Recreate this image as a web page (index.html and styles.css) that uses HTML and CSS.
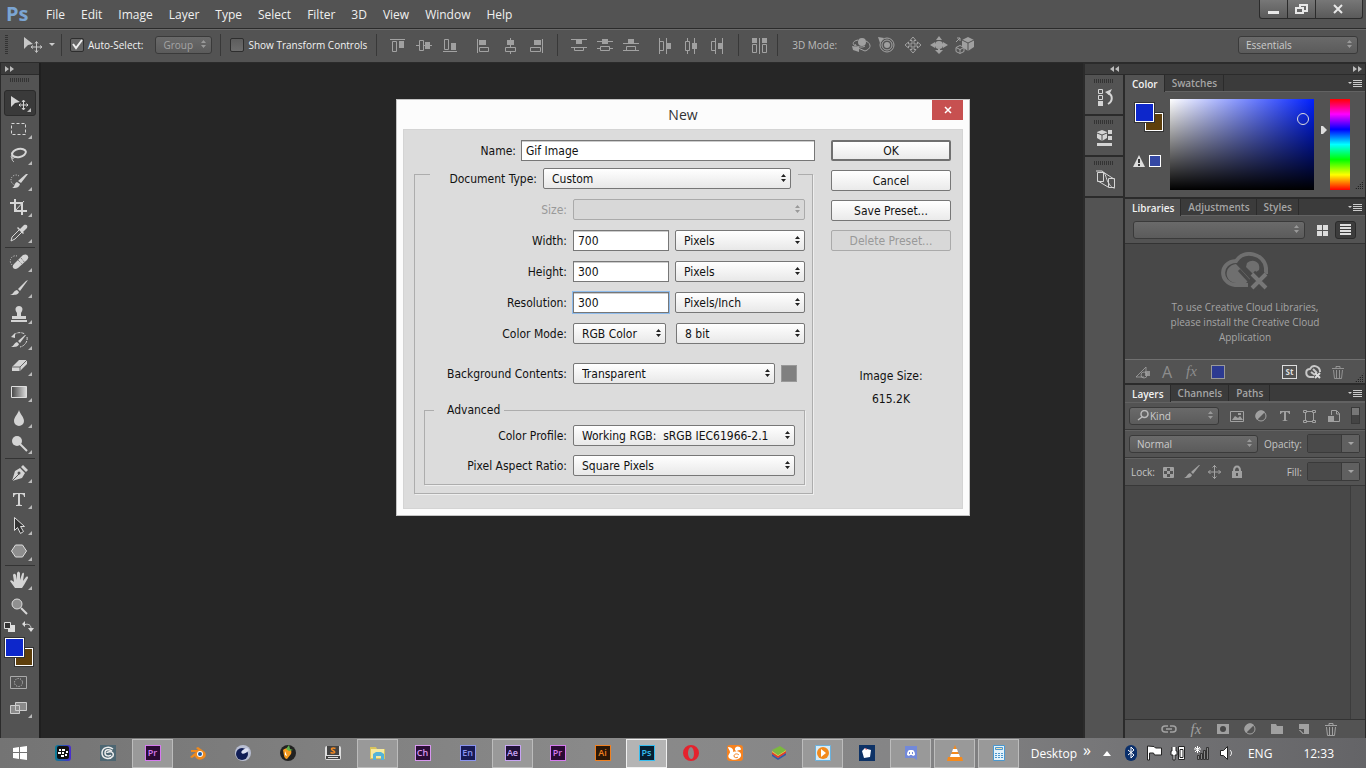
FILE: index.html
```html
<!DOCTYPE html>
<html lang="en">
<head>
    <meta charset="UTF-8">
    <meta name="viewport" content="width=device-width, initial-scale=1.0">
    <title>New</title>
    <link rel="stylesheet" href="styles.css">
</head>
<body>
    <header class="menubar">
        <span class="logo">Ps</span>
        <nav class="menus">
            <button>File</button>
            <button>Edit</button>
            <button>Image</button>
            <button>Layer</button>
            <button>Type</button>
            <button>Select</button>
            <button>Filter</button>
            <button>3D</button>
            <button>View</button>
            <button>Window</button>
            <button>Help</button>
        </nav>
        <div class="window-controls">
            <button aria-label="Minimize"><svg width="27" height="18"><path fill="#e8e8e8" d="M8 11h11v3H8z"/></svg></button>
            <button aria-label="Restore"><svg width="27" height="18"><path fill="none" stroke="#e8e8e8" stroke-width="2" d="M12 8V5h7v6h-3M8 8h7v5H8z"/></svg></button>
            <button class="close" aria-label="Close"><svg width="46" height="18"><path stroke="#e8e8e8" stroke-width="2" d="M18 5l8 8M26 5l-8 8"/></svg></button>
        </div>
    </header>

    <div class="options">
        <i class="grip-v"></i>
        <svg class="tool-preview" width="20" height="20"><path fill="#c8c8c8" d="M2 2v12l4-4 5-1z"/><path fill="none" stroke="#c8c8c8" d="M14.500 7v10M9.500 12h10M13 8.500l1.500-2 1.500 2M13 15.500l1.500 2 1.500-2M11 10.500l-2 1.500 2 1.500M18 10.500l2 1.500-2 1.500"/></svg>
        <i class="caret"></i>
        <i class="sep"></i>
        <label class="check"><input type="checkbox" checked>Auto-Select:</label>
        <select class="dark-select group" aria-label="Auto-select target" disabled><option>Group</option></select>
        <i class="sep"></i>
        <label class="check"><input type="checkbox">Show Transform Controls</label>
        <i class="sep"></i>
        <div class="icons">
            <button aria-label="Align top"><svg width="26" height="20"><path class="s" d="M5 4.500h15M7.500 6.500h4v10h-4z"/><path class="f" d="M14 6h5v7h-5z"/></svg></button>
            <button aria-label="Align middle"><svg width="26" height="20"><path class="s" d="M5 10.500h3M8.500 5.500h4v10h-4zM12 10.500h2M19 10.500h2"/><path class="f" d="M14 7h5v7h-5z"/></svg></button>
            <button aria-label="Align bottom"><svg width="26" height="20"><path class="s" d="M6 16.500h14M7.500 4.500h4v10h-4z"/><path class="f" d="M14 8h5v7h-5z"/></svg></button>
        </div>
        <div class="icons">
            <button aria-label="Align left"><svg width="26" height="20"><path class="s" d="M6.500 4v14M8.500 12.500h9v4h-9z"/><path class="f" d="M8 5h7v5H8z"/></svg></button>
            <button aria-label="Align center"><svg width="26" height="20"><path class="s" d="M13.500 3v3M13.500 10v2M13.500 16v3M8.500 12.500h10v4h-10z"/><path class="f" d="M10 5h7v5h-7z"/></svg></button>
            <button aria-label="Align right"><svg width="26" height="20"><path class="s" d="M19.500 4v14M7.500 12.500h10v4h-10z"/><path class="f" d="M11 5h7v5h-7z"/></svg></button>
        </div>
        <i class="sep"></i>
        <div class="icons">
            <button aria-label="Distribute top"><svg width="26" height="20"><path class="s" d="M5 4.500h16M5 12.500h16M8.500 12.500h9v3h-9z"/><path class="f" d="M10 5h6v4h-6z"/></svg></button>
            <button aria-label="Distribute middle"><svg width="26" height="20"><path class="s" d="M5 6.500h5M16 6.500h5M5 13.500h3M18 13.500h3M8.500 11.500h9v4h-9z"/><path class="f" d="M10 4h6v5h-6z"/></svg></button>
            <button aria-label="Distribute bottom"><svg width="26" height="20"><path class="s" d="M5 8.500h16M5 15.500h16M8.500 11.500h9v4h-9z"/><path class="f" d="M10 4h6v4h-6z"/></svg></button>
        </div>
        <div class="icons">
            <button aria-label="Distribute left"><svg width="26" height="20"><path class="s" d="M7.500 3v16M14.500 3v16M7.500 6.500h4v9h-4z"/><path class="f" d="M15 8h4v6h-4z"/></svg></button>
            <button aria-label="Distribute center"><svg width="26" height="20"><path class="s" d="M9.500 3v3M9.500 15v4M16.500 3v16M7.500 6.500h4v9h-4z"/><path class="f" d="M14 8h5v6h-5z"/></svg></button>
            <button aria-label="Distribute right"><svg width="26" height="20"><path class="s" d="M11.500 3v16M18.500 3v16M7.500 6.500h4v9h-4z"/><path class="f" d="M14 8h4v6h-4z"/></svg></button>
        </div>
        <i class="sep"></i>
        <div class="icons">
            <button aria-label="Auto-align layers"><svg width="26" height="20"><path class="s" d="M12.500 3v16M5.500 9.500h4v8h-4zM15.500 9.500h4v8h-4z"/><path class="f" d="M5 3h5v5H5zM15 3h5v5h-5z"/></svg></button>
        </div>
        <i class="sep near"></i>
        <span class="mode-label">3D Mode:</span>
        <div class="icons">
            <button aria-label="Orbit"><svg width="26" height="20"><circle class="f" cx="14" cy="7" r="4"/><path class="s" d="M10 5c-6 1-6 5-2 6M18 6c6 3 5 8-1 10l-7-3M7 9c0 3 8 4 10 2"/><path class="f" d="M4 11l7 1v5l-6-2z"/></svg></button>
            <button aria-label="Roll"><svg width="26" height="20"><circle class="s" cx="13" cy="10" r="7"/><circle class="s" cx="13" cy="10" r="5"/><circle class="f" cx="13" cy="10" r="3"/><path class="f" d="M4 2l6 1-4 5z"/></svg></button>
            <button aria-label="Pan"><svg width="26" height="20"><path class="s" d="M13 2l3 3.500h-2V9h3.500V7l3.500 3-3.500 3v-2H14v3.500h2L13 18l-3-3.500h2V11H8.500v2L5 10l3.500-3v2H12V5.500h-2z"/></svg></button>
            <button aria-label="Slide"><svg width="26" height="20"><path class="f" d="M13 1l3 4h-6zM4 10l5-3v6zM22 10l-5-3v6zM13 19l-4-4h8z"/><circle class="f" cx="13" cy="10" r="4"/><path class="w" d="M8 10h10M13 14v3"/></svg></button>
            <button aria-label="Scale"><svg width="26" height="20"><path class="f" d="M16 2l6 3v7l-6 4-6-4V5z"/><path d="M10 5l6 3 6-3M16 8v8" fill="none" stroke="#535353"/><path class="s" d="M8 10.500l4 2v4l-4 2-4-2v-4zM4 12.500l4 2 4-2M8 14v4M4 7l4-4M5 3h3v3"/></svg></button>
        </div>
        <select class="dark-select workspace" aria-label="Workspace"><option>Essentials</option></select>
    </div>

    <main class="workspace-area">
        <aside class="toolbar">
            <div class="strip"><svg width="10" height="6"><path fill="#bbb" d="M0 0l4 3-4 3zM5 0l4 3-4 3z"/></svg></div>
            <i class="grip"></i>
            <div class="tools">
                <button class="tool active" aria-label="Move"><svg width="22" height="20"><path d="M3 3v11l4-4 5-1z"/><path class="l" d="M15.500 7.500v9M11 12h9M14 9l1.500-2L17 9M14 15l1.500 2 1.500-2M12.500 10.500L11 12l1.500 1.500M18.500 10.500L20 12l-1.500 1.500"/></svg></button>
                <button class="tool" aria-label="Marquee"><svg width="22" height="20"><path class="l" stroke-dasharray="3 2" d="M3.500 4.500h14v11h-14z"/></svg></button>
                <button class="tool" aria-label="Lasso"><svg width="22" height="20"><ellipse class="l2" cx="11" cy="8" rx="7" ry="4" transform="rotate(-12 11 8)"/><path class="l" d="M4 10c-2 2 0 4 2 3s-1-4-2-1 2 5 2 5"/></svg></button>
                <button class="tool" aria-label="Quick Selection"><svg width="22" height="20"><path class="l" stroke-dasharray="1 1.500" d="M11 5a5 5 0 1 0 -3 9"/><path d="M20 3l-7 9-3-2 8-7zM9 11l3 2c-1 4-4 4-8 4 3-1 2-5 5-6z"/></svg></button>
                <button class="tool" aria-label="Crop"><svg width="22" height="20"><path class="l2" d="M7 2v12h12M2 6h12v12"/><path class="l" d="M8 13l8-9"/></svg></button>
                <button class="tool" aria-label="Eyedropper"><svg width="22" height="20"><path d="M12 6l4-4c3-1 4 1 3 3l-4 4 1 1-1 1-6-6 1-1z"/><path class="l" d="M11 7l-7 7-1 4 4-2 7-7"/></svg></button>
                <hr>
                <button class="tool" aria-label="Healing Brush"><svg width="22" height="20"><path class="l" stroke-dasharray="1 1.500" d="M9 4a5 5 0 1 0 -3 10"/><path d="M15 3c4-2 7 2 4 5l-9 8c-4 3-7-1-4-4z"/><path fill="none" stroke="#666" stroke-dasharray="1 1" d="M10 8l5 5M13 6l4 5"/></svg></button>
                <button class="tool" aria-label="Brush"><svg width="22" height="20"><path d="M20 2l-8 11-2-2 8-8zM9 12l2 2c-1 3-4 3-9 3 4-1 3-4 7-5z"/></svg></button>
                <button class="tool" aria-label="Clone Stamp"><svg width="22" height="20"><path d="M9 9c-3-4-1-7 2-7s5 3 2 7v3h5v3H4v-3h5zM3 16h16v2H3z"/></svg></button>
                <button class="tool" aria-label="History Brush"><svg width="22" height="20"><path d="M18 5l-6 8-2-2 7-6zM9 12l2 2c-1 3-4 3-8 3 3-1 3-4 6-5zM3 7l4-4v5z"/><path class="l" d="M6 5c3-3 7-3 11-1M19 7c1 4-2 9-7 10" stroke-dasharray="3 1"/></svg></button>
                <button class="tool" aria-label="Eraser"><svg width="22" height="20"><path d="M11 4h8v4l-7 7H4v-4z"/><path fill="none" stroke="#666" d="M4 11h8l7-7M12 11v4"/></svg></button>
                <button class="tool" aria-label="Gradient"><svg width="22" height="20"><defs><linearGradient id="ramp"><stop stop-color="#444"/><stop offset="1" stop-color="#ddd"/></linearGradient></defs><path d="M3.500 4.500h15v11h-15z" style="fill:url(#ramp);stroke:#ddd"/></svg></button>
                <button class="tool" aria-label="Blur"><svg width="22" height="20"><path d="M11 2c1 4 5 7 5 11a5 5 0 0 1 -10 0c0-4 4-7 5-11z"/></svg></button>
                <button class="tool" aria-label="Dodge"><svg width="22" height="20"><circle cx="9" cy="7" r="5"/><path class="l2" d="M12 10l7 7"/></svg></button>
                <hr>
                <button class="tool" aria-label="Pen"><svg width="22" height="20"><path d="M15 2l5 5-2 2-5-5zM12 5l5 5-3 5-10 3 3-10z"/><path fill="none" stroke="#555" d="M4 18l7-7"/><circle cx="11" cy="10" r="1.500" style="fill:#555"/></svg></button>
                <button class="tool" aria-label="Type"><svg width="22" height="20"><path d="M5 4h12v4h-1c0-2-1-3-4-3v10c0 1 1 1 2 1v1H8v-1c1 0 2 0 2-1V5C7 5 6 6 6 8H5z"/></svg></button>
                <button class="tool" aria-label="Path Selection"><svg width="22" height="20"><path style="fill:#333;stroke:#ddd" d="M6.500 2.500v13l3-3 3 6 3-2-3-5h4z"/></svg></button>
                <button class="tool" aria-label="Shape"><svg width="22" height="20"><path style="fill:#8e8e8e;stroke:#ddd" d="M7.500 4h7l4 6-4 6h-7l-4-6z"/></svg></button>
                <hr>
                <button class="tool" aria-label="Hand"><svg width="22" height="20"><path d="M7 18l-5-7c1-2 3 0 4 1L5 5c1-2 2-1 3 0l1 5V3c1-2 2-2 3 0v7l2-6c1-2 2-1 2 0l-1 7 3-4c2-1 2 0 2 1l-4 7-2 3z"/></svg></button>
                <button class="tool plain" aria-label="Zoom"><svg width="22" height="20"><circle style="fill:#909090;stroke:#ddd" cx="9" cy="8" r="5"/><path class="l2" d="M13 12l6 6"/></svg></button>
            </div>
            <div class="mini-icons">
                <svg width="12" height="12"><path fill="#ddd" d="M4 4h7v7H4z"/><path fill="#333" stroke="#ddd" d="M.5 1.500h6v6h-6z"/></svg>
                <svg width="12" height="12"><path fill="#ddd" d="M0 3l3-3v6zM6 7h6l-3 4z"/><path fill="none" stroke="#ddd" d="M3 3.500c4-1 6 1 6 4"/></svg>
            </div>
            <div class="swatches"><i class="fore"></i><i class="back"></i></div>
            <button class="tool plain mask" aria-label="Quick Mask"><svg width="22" height="20"><path class="l" style="stroke:#aaa" d="M2.500 4.500h16v12h-16z"/><circle class="l" stroke-dasharray="1 1.500" cx="10.500" cy="10.500" r="4"/></svg></button>
            <button class="tool" aria-label="Screen Mode"><svg width="22" height="20"><path style="fill:#8a8a8a;stroke:#ccc" d="M2.500 7.500h9v8h-9zM7.500 4.500h11v8h-11z"/></svg></button>
        </aside>

        <section class="canvas">
            <dialog class="new-dialog" open aria-label="New">
                <div class="titlebar">New<button aria-label="Close"><svg width="10" height="10"><path stroke="#fff" stroke-width="1.500" d="M2 2l6 6M8 2L2 8"/></svg></button></div>
                <form class="dialog-body">
                    <div class="fields">
                        <div class="row name-row">
                            <label for="name">Name:</label>
                            <input type="text" id="name" value="Gif Image">
                        </div>
                        <fieldset class="doc">
                            <legend><label for="docType">Document Type:</label>
                                <select id="docType"><option>Custom</option></select></legend>
                            <div class="row">
                                <label for="size" class="off">Size:</label>
                                <select id="size" class="full" disabled><option></option></select>
                            </div>
                            <div class="row">
                                <label for="width">Width:</label>
                                <input type="text" id="width" value="700">
                                <select aria-label="Width unit"><option>Pixels</option></select>
                            </div>
                            <div class="row">
                                <label for="height">Height:</label>
                                <input type="text" id="height" value="300">
                                <select aria-label="Height unit"><option>Pixels</option></select>
                            </div>
                            <div class="row">
                                <label for="resolution">Resolution:</label>
                                <input type="text" id="resolution" class="focused" value="300">
                                <select aria-label="Resolution unit"><option>Pixels/Inch</option></select>
                            </div>
                            <div class="row">
                                <label for="mode">Color Mode:</label>
                                <select id="mode" class="mode"><option>RGB Color</option></select>
                                <select class="depth" aria-label="Bit depth"><option>8 bit</option></select>
                            </div>
                            <div class="row spaced">
                                <label for="contents">Background Contents:</label>
                                <select id="contents" class="contents"><option>Transparent</option></select>
                                <i class="chip"></i>
                            </div>
                            <fieldset class="advanced">
                                <legend>Advanced</legend>
                                <div class="row">
                                    <label for="profile">Color Profile:</label>
                                    <select id="profile"><option>Working RGB:&nbsp; sRGB IEC61966-2.1</option></select>
                                </div>
                                <div class="row">
                                    <label for="aspect">Pixel Aspect Ratio:</label>
                                    <select id="aspect"><option>Square Pixels</option></select>
                                </div>
                            </fieldset>
                        </fieldset>
                    </div>
                    <div class="actions">
                        <button type="button" class="default">OK</button>
                        <button type="button">Cancel</button>
                        <button type="button">Save Preset...</button>
                        <button type="button" disabled>Delete Preset...</button>
                        <p class="image-size">Image Size:<br>615.2K</p>
                    </div>
                </form>
            </dialog>
        </section>

        <aside class="right-side">
            <div class="strip split">
                <svg width="10" height="6"><path fill="#bbb" d="M4 0v6L0 3zM9 0v6L5 3z"/></svg>
                <svg width="10" height="6"><path fill="#bbb" d="M0 0l4 3-4 3zM5 0l4 3-4 3z"/></svg>
            </div>
            <div class="dock">
                <div class="collapsed">
                    <button aria-label="History"><i class="grip"></i><svg width="20" height="20"><path class="l" d="M3.500 2.500h4v4h-4zM3.500 8.500h4v4h-4z"/><path d="M3 14h5v5H3zM10 5l7-3-3 6z"/><path class="l2" d="M13 6c5 2 5 8 0 11"/></svg></button>
                    <button aria-label="Properties"><i class="grip"></i><svg width="20" height="20"><path d="M7 2l5 2v6l-5 3-5-3V4zM13 2h4v4h-4zM13 8h4v4h-4zM2 15h15v3H2z"/><path fill="none" stroke="#535353" d="M2 5l5 2 5-2M7 7v6"/></svg></button>
                    <button aria-label="Device preview"><i class="grip"></i><svg width="22" height="20"><path class="l" d="M2.500 3.500h6v9h-6zM13.500 9.500h6v9h-6zM1 2h6c4 2 4 8 6 11s3 6 7 6M8 3l11 7M3 12l10 6"/></svg></button>
                </div>
                <div class="panels">
                    <section class="panel">
                        <div class="tabs"><button class="on">Color</button><button>Swatches</button><i class="menu-icon"></i></div>
                        <div class="color">
                            <div class="picked">
                                <div class="swatches"><i class="fore"></i><i class="back"></i></div>
                                <div class="warn"><svg width="12" height="12"><path fill="#ddd" d="M6 0l6 12H0z"/><path stroke="#333" stroke-width="2" d="M6 4v4M6 9v2"/></svg><i></i></div>
                            </div>
                            <div class="field"><i class="ring"></i></div>
                            <svg class="pointer" width="6" height="8"><path fill="#ddd" d="M0 0h2l4 4-4 4H0z"/></svg>
                            <div class="hue"></div>
                            <i class="resize"></i>
                        </div>
                    </section>
                    <section class="panel">
                        <div class="tabs"><button class="on">Libraries</button><button>Adjustments</button><button>Styles</button><i class="menu-icon"></i></div>
                        <div class="lib-head">
                            <select class="dark-select" aria-label="Library" disabled><option></option></select>
                            <button aria-label="Grid view"><svg width="12" height="12"><path fill="#ddd" d="M0 1h5v5H0zM6 1h5v5H6zM0 7h5v5H0zM6 7h5v5H6z"/></svg></button>
                            <button class="on" aria-label="List view"><svg width="12" height="12"><path fill="#ddd" d="M0 0h11v2H0zM0 3h11v2H0zM0 6h11v2H0zM0 9h11v2H0z"/></svg></button>
                        </div>
                        <div class="lib-body">
                            <svg width="50" height="40"><g fill="none" stroke="#6f6f6f" stroke-width="4"><path d="M28 33H15C-1 31-1 10 16 9 24-3 44 1 46 16v6"/></g><path fill="#6f6f6f" d="M16 12l14 15-4 4H16C4 30 3 14 16 12z"/><path fill="none" stroke="#484848" stroke-width="3" d="M29 29L19 18"/><path fill="#6f6f6f" d="M27 11c6-5 14-1 12 7l-6 4-7-7z"/><path stroke="#484848" stroke-width="9" d="M32 22l14 14M46 22L32 36"/><path stroke="#777" stroke-width="4" d="M32 22l14 14M46 22L32 36"/></svg>
                            <p>To use Creative Cloud Libraries,<br>please install the Creative Cloud<br>Application</p>
                        </div>
                        <div class="lib-foot">
                            <svg width="18" height="18"><path class="s" d="M2 14h8M2 14L12 4v4"/><path class="f" d="M11 8h5v5h-5z"/><circle class="s" cx="10" cy="12" r="3"/></svg>
                            <span class="glyph-a">A</span>
                            <span class="fx">fx</span>
                            <i class="blue"></i>
                            <span class="stock">St</span>
                            <svg width="18" height="16"><path fill="none" stroke="#c8c8c8" stroke-width="2" d="M9 13H5C0 12 0 5 5 5c3-5 10-3 10 3M10 11L6 8M8 5l4 4"/><path stroke="#ddd" stroke-width="2" d="M10 9l5 5M15 9l-5 5"/></svg>
                            <svg width="16" height="16"><path class="s" d="M2 4.500h12M6 4V2.500h4V4M3.500 6l1 8.500h7l1-8.500M6.500 6v8M9.500 6v8"/></svg>
                            <i class="resize"></i>
                        </div>
                    </section>
                    <section class="panel layers">
                        <div class="tabs"><button class="on">Layers</button><button>Channels</button><button>Paths</button><i class="menu-icon"></i></div>
                        <div class="layer-row">
                            <select class="dark-select kind" aria-label="Filter type"><option>Kind</option></select>
                            <div class="filters">
                                <svg width="16" height="16"><path class="s" d="M1.500 3.500h13v10h-13z"/><path class="f" d="M3 12l3-4 3 2 2-2 3 4zM9 5h3v2H9z"/></svg>
                                <svg width="16" height="16"><circle class="s" cx="8" cy="8" r="5"/><path class="f" d="M12 4a5 5 0 1 0 -8 8z"/></svg>
                                <svg width="16" height="16"><path class="f" d="M3 3h10v3h-1c0-1-1-2-3-2v8l2 1H5l2-1V4C5 4 4 5 4 6H3z"/></svg>
                                <svg width="16" height="16"><path class="s" d="M4.500 4v8M5 3.500h7M12.500 4v8M5 13.500h7M2.500 2.500h3v2h-3zM11.500 2.500h3v2h-3zM2.500 12.500h3v2h-3zM11.500 12.500h3v2h-3z"/></svg>
                                <svg width="16" height="16"><path class="s" d="M6.500 7V2.500h5l3 3v8H9M11.500 3v3h3"/><path class="f" d="M3 8h6v6H3z"/></svg>
                            </div>
                            <i class="toggle"></i>
                        </div>
                        <div class="layer-row">
                            <select class="dark-select blend" aria-label="Blend mode"><option>Normal</option></select>
                            <label for="opacity">Opacity:</label>
                            <span class="combo"><input type="text" id="opacity" disabled><button aria-label="Opacity slider"><i class="caret"></i></button></span>
                        </div>
                        <div class="layer-row">
                            <span class="lock">Lock:</span>
                            <div class="locks">
                                <svg width="16" height="16"><path class="s" d="M2.500 3.500h10v10h-10z"/><path class="f" d="M3 4h3v3H3zM9 4h3v3H9zM6 7h3v3H6zM3 10h3v3H3zM9 10h3v3H9z"/></svg>
                                <svg width="16" height="16"><path class="f" d="M16 1L9 10 7 8l8-7zM6 9l2 2c-1 3-4 3-8 3 3-1 3-4 6-5z"/></svg>
                                <svg width="16" height="16"><path class="s" d="M7.500 1v14M1 8h13M5.500 3.500l2-2 2 2M5.500 12.500l2 2 2-2M3.500 6l-2 2 2 2M11.500 6l2 2-2 2"/></svg>
                                <svg width="14" height="16"><path class="w" d="M4 7c0-6 6-6 6 0"/><path class="f" d="M2 7h10v7H2z"/><path fill="#555" d="M6 9h2v3H6z"/></svg>
                            </div>
                            <label for="fill">Fill:</label>
                            <span class="combo"><input type="text" id="fill" disabled><button aria-label="Fill slider"><i class="caret"></i></button></span>
                        </div>
                        <div class="layer-list"></div>
                        <div class="layer-foot">
                            <svg width="16" height="16"><path class="s" stroke-width="1.500" d="M7 5H4c-4 0-4 6 0 6h3M9 5h3c4 0 4 6 0 6H9M5 8h6"/></svg>
                            <span class="fx">fx</span>
                            <svg width="16" height="16"><path class="f" d="M2 3h12v10H2z"/><circle cx="8" cy="8" r="3" fill="#484848"/></svg>
                            <svg width="16" height="16"><circle class="s" cx="8" cy="8" r="5"/><path class="f" d="M12 4a5 5 0 1 0 -8 8z"/></svg>
                            <svg width="16" height="16"><path class="f" d="M2 3h5l1 2h6v8H2z"/></svg>
                            <svg width="16" height="16"><path class="f" d="M3 3h10v10H8V8H3z"/><path class="s" d="M3.500 9v0l4 4z"/></svg>
                            <svg width="16" height="16"><path class="s" d="M2 4.500h12M6 4V2.500h4V4M3.500 6l1 8.500h7l1-8.500M6.500 6v8M9.500 6v8"/></svg>
                        </div>
                    </section>
                </div>
            </div>
        </aside>
    </main>

    <footer class="taskbar">
        <button class="start" aria-label="Start"><svg width="14" height="14"><path fill="#fff" d="M0 2l6-1v5H0zM7 1l7-1v6H7zM0 7h6v6l-6-1zM7 7h7v7l-7-1z"/></svg></button>
        <div class="tasks">
            <button class="task" aria-label="BlackBerry"><svg width="16" height="16"><defs><linearGradient id="bb"><stop stop-color="#0b7f93"/><stop offset="1" stop-color="#4a2bd0"/></linearGradient></defs><rect width="16" height="16" rx="3" fill="url(#bb)"/><rect x="2" y="1" width="12" height="13" rx="2" fill="#111"/><path fill="#fff" d="M4 4h2v2H4zM7 4h3v2H7zM3 7h3v2H3zM7 7h2v2H7zM11 6h2v2h-2zM6 10h3v2H6zM10 9h2v2h-2z"/></svg></button>
            <button class="task" aria-label="3ds Max"><svg width="16" height="16"><path fill="#4d6672" d="M0 0h16v16H0z"/><path fill="none" stroke="#eee" stroke-width="1.500" d="M13 4C9 1 2 2 2 8s8 7 11 3c2-5-6-5-6-3M12 6c-3-2-7-2-7 2s5 3 6 2"/></svg></button>
            <button class="task open"><span class="app pr">Pr</span></button>
            <button class="task" aria-label="Blender"><svg width="16" height="16"><path fill="#f08a1c" d="M0 12l6-5H1V5h7L6 3l2-1 7 5c4 7-8 11-10 4l-3 2z"/><circle cx="10" cy="9" r="3" fill="#fff"/><circle cx="10" cy="9" r="2" fill="#205a9e"/></svg></button>
            <button class="task" aria-label="Cinema 4D"><svg width="16" height="16"><circle cx="8" cy="8" r="8" fill="#b8bed2"/><circle cx="7" cy="9" r="6" fill="#101d55"/><ellipse cx="10" cy="6" rx="4" ry="2" fill="#dce0f2" transform="rotate(-30 10 6)"/></svg></button>
            <button class="task" aria-label="FL Studio"><svg width="16" height="16"><circle cx="8" cy="8" r="8" fill="#222"/><path fill="#f59b20" d="M3 5c4-4 10-1 8 4l-4 5c-3 0-3-4-4-9z"/><path fill="#5eb04b" d="M6 4l3-4 1 4 3 1-4 1z"/><path fill="#fff" d="M5 6l2 5-2-1z"/></svg></button>
            <button class="task" aria-label="Sublime Text"><svg width="16" height="16"><rect y="1" width="16" height="14" rx="2" fill="#ddd"/><path fill="#444" d="M2 1h12v9H2zM1 11h14v3H1z"/><path fill="#ddd" d="M3 12h10v1H3z"/><path fill="none" stroke="#f28a24" stroke-width="1.500" d="M10.500 3.500C7 2 5 4 8 5.500s2 3.500-2.500 2"/></svg></button>
            <button class="task open" aria-label="File Explorer"><svg width="18" height="16"><path fill="#d9c45c" d="M1 2h6l1 2h8v10H1z"/><path fill="#f5e9a0" d="M2 4h13v9H2z"/><path fill="#54b3d8" d="M4 15V9l3-2h5l3 2v6h-3v-4H7v4z"/></svg></button>
            <button class="task"><span class="app ch">Ch</span></button>
            <button class="task"><span class="app en">En</span></button>
            <button class="task open"><span class="app ae">Ae</span></button>
            <button class="task"><span class="app pr">Pr</span></button>
            <button class="task"><span class="app ai">Ai</span></button>
        </div>
        <div class="tasks second">
            <button class="task current"><span class="app ps">Ps</span></button>
            <button class="task" aria-label="Opera"><svg width="16" height="16"><path fill="#e5222d" fill-rule="evenodd" d="M8 0a8 8 0 1 1 0 16a8 8 0 1 1 0-16M8 2C4 3 4 13 8 14s4-11 0-12"/></svg></button>
            <button class="task" aria-label="UC Browser"><svg width="16" height="16"><rect width="16" height="16" rx="3" fill="#f58220"/><path fill="#fff" d="M1 2c4 0 6 3 5 5 4-2 9 0 8 4s-9 5-12 2c-2-3 1-4 1-6S1 4 1 2zM8 5c-1-4 5-5 6-1 0 2-4 0-4 3z"/><path fill="none" stroke="#f58220" d="M12 10c-2-2-5-1-5 1s3 2 4 1"/></svg></button>
            <button class="task" aria-label="BlueStacks"><svg width="16" height="16"><path fill="#315aa8" d="M1 9l6 4 8-5v2l-8 5-6-4z"/><path fill="#e33b2e" d="M1 7l6 4 8-5v2l-8 5-6-4z"/><path fill="#f5d42c" d="M1 6l6 4 8-5v1l-8 5-6-4z"/><path fill="#7cb93e" d="M1 5l8-4 6 4-8 5z"/></svg></button>
            <button class="task open" aria-label="Media Player"><svg width="16" height="16"><path fill="#d6ecf8" stroke="#6ab1dc" d="M.5.5h15v15H.5z"/><circle cx="8" cy="8" r="6" fill="#f28a1c"/><path fill="#fff" d="M6 4l5 4-5 4z"/></svg></button>
            <button class="task" aria-label="Card game"><svg width="16" height="16"><path fill="#0d3266" d="M0 0h16v16H0z"/><path fill="#fff" d="M3 6l3-3 2 1 4 1-1 7-6 1z"/><path fill="#c23" d="M6 3l2 1-1 1z"/></svg></button>
            <button class="task open" aria-label="Discord"><svg width="16" height="16"><path fill="#7289da" d="M2 1h12v14l-3-2H2z"/><path fill="#fff" d="M4 10c0-3 1-5 3-5h2c2 0 3 2 3 5l-2 1-1-1H7l-1 1z"/><path fill="#7289da" d="M6 7h1v2H6zM9 7h1v2H9z"/></svg></button>
            <button class="task open" aria-label="VLC"><svg width="16" height="16"><path fill="#f58a1c" d="M8 0l5 12h2l1 4H0l1-4h2z"/><path fill="#fff" d="M6 4h4l1 3H5zM4 9h8l1 3H3z"/></svg></button>
            <button class="task open" aria-label="Calculator"><svg width="16" height="16"><path fill="#e4f2fa" stroke="#4b98cf" d="M2.500.5h11v15h-11z"/><path fill="#f6dfae" stroke="#4b98cf" d="M4.500 2.500h7v2h-7z"/><path fill="none" stroke="#4b98cf" stroke-dasharray="2 1" d="M4 8.500h8M4 10.500h8M4 12.500h8"/></svg></button>
        </div>
        <div class="tray">
            <span>Desktop</span><span class="more">»</span>
            <svg class="up" width="8" height="5"><path fill="#fff" d="M4 0l4 5H0z"/></svg>
            <svg width="16" height="18"><rect x="2" y="1" width="12" height="16" rx="6" fill="#0a2f6b"/><path fill="none" stroke="#fff" d="M5 6l6 5-3 3V3l3 3-6 5"/></svg>
            <svg width="18" height="18"><path fill="#fff" stroke="#222" d="M2.500 2v14h2V9h4l1 2h7V4h-6L9 2.500z"/></svg>
            <svg width="18" height="18"><path fill="#fff" stroke="#222" d="M9.500 2.500h6v13h-6zM3 3v4H2v4h2v5h2v-5h2V7H7V3"/><path stroke="#222" d="M11 5.500h3v8h-3z" fill="#fff"/></svg>
            <svg width="18" height="18"><path fill="#888" stroke="#333" d="M4.500 11.500h2v4h-2zM7.500 9.500h2v6h-2zM10.500 6.500h2v9h-2zM13.500 3.500h2v12h-2z"/><path stroke="#fff" d="M1 5h7M4.500 2v7M2 3l5 5M7 3L2 8"/></svg>
            <svg width="18" height="18"><path fill="#fff" stroke="#222" d="M3.500 6.500h3l4-4v13l-4-4h-3z"/><path fill="none" stroke="#fff" d="M13 6c2 2 2 4 0 6"/></svg>
            <span class="lang">ENG</span>
            <span class="clock">12:33</span>
        </div>
    </footer>
</body>
</html>
```

FILE: styles.css
```css
* {
    box-sizing: border-box;
}
:root {
    --line: #2b2b2b;
    --panel: #535353;
    --arrows: url("data:image/svg+xml,%3Csvg xmlns='http://www.w3.org/2000/svg' width='7' height='9'%3E%3Cpath fill='%23222' d='M1 3l2.500-3L6 3zM1 5h5l-2.500 3z'/%3E%3C/svg%3E");
    --arrows-off: url("data:image/svg+xml,%3Csvg xmlns='http://www.w3.org/2000/svg' width='7' height='9'%3E%3Cpath fill='%23999' d='M1 3l2.500-3L6 3zM1 5h5l-2.500 3z'/%3E%3C/svg%3E");
    --search: url("data:image/svg+xml,%3Csvg xmlns='http://www.w3.org/2000/svg' width='12' height='12'%3E%3Cpath fill='none' stroke='%23bbb' stroke-width='1.500' d='M1 10l4-3M11 4a3.500 3.500 0 1 1-7 0a3.500 3.500 0 1 1 7 0'/%3E%3C/svg%3E");
}
body {
    margin: 0;
    height: 100vh;
    display: flex;
    flex-direction: column;
    overflow: hidden;
    background: #262626;
    color: #ddd;
    font-family: "Open Sans", "Noto Sans", sans-serif;
    font-size: 10px;
}
button, input, select {
    font: inherit;
    color: inherit;
    margin: 0;
}
button {
    border: 0;
    padding: 0;
    background: none;
}
select {
    appearance: none;
    opacity: 1;
}
svg {
    display: block;
    flex: none;
}
i {
    flex: none;
}

/* shared icon strokes */
.s {
    fill: none;
    stroke: #a2a2a2;
}
.w {
    fill: none;
    stroke: #a2a2a2;
    stroke-width: 2;
}
.f {
    fill: #a0a0a0;
}
.l {
    fill: none;
    stroke: #d6d6d6;
}
.l2 {
    fill: none;
    stroke: #d6d6d6;
    stroke-width: 2;
}

/* menu bar */
.menubar {
    display: flex;
    align-items: center;
    height: 28px;
    background: var(--panel);
    font-size: 12px;
    color: #f0f0f0;
}
.logo {
    width: 38px;
    padding-left: 6px;
    font-size: 20px;
    line-height: 26px;
    font-weight: 700;
    color: #7ba5d3;
}
.menus {
    display: flex;
    flex: 1;
}
.menus button {
    padding: 0 8px;
}
.window-controls {
    display: flex;
    align-self: flex-start;
    margin-right: 3px;
    border: 1px solid var(--line);
    border-top: 0;
    border-radius: 0 0 3px 3px;
    background: linear-gradient(#777, #5a5a5a);
}
.window-controls button + button {
    border-left: 1px solid var(--line);
}

/* options bar */
.options {
    display: flex;
    align-items: center;
    height: 35px;
    padding-bottom: 2px;
    border-top: 1px solid var(--line);
    border-bottom: 1px solid var(--line);
    box-shadow: inset 0 1px #6a6a6a;
    background: var(--panel);
}
.grip-v {
    width: 3px;
    height: 20px;
    margin: 0 14px 0 5px;
    background: repeating-linear-gradient(#333 0 1px, transparent 1px 2px);
}
.caret {
    border: 3px solid transparent;
    border-top-color: #ccc;
    border-bottom: 0;
}
.tool-preview {
    margin-right: 7px;
}
.sep {
    width: 1px;
    height: 22px;
    margin: 0 8px;
    background: #383838;
}
.sep.near {
    margin: 0 14px 0 4px;
}
.options .caret + .sep {
    margin-left: 6px;
    margin-right: 7px;
}
.check {
    display: flex;
    align-items: center;
    gap: 4px;
    color: #f2f2f2;
    white-space: nowrap;
}
.check input {
    appearance: none;
    width: 14px;
    height: 14px;
    border: 1px solid #2e2e2e;
    border-radius: 2px;
    background: linear-gradient(#5d5d5d, #6c6c6c);
}
.check input:checked {
    background: url("data:image/svg+xml,%3Csvg xmlns='http://www.w3.org/2000/svg' width='12' height='12'%3E%3Cpath fill='none' stroke='%23eee' stroke-width='2' d='M2 5l3 4 6-8'/%3E%3C/svg%3E") #666;
}
.options .check {
    margin: 0 1px;
}
.dark-select {
    height: 18px;
    padding: 0 7px;
    border: 1px solid #3a3a3a;
    border-radius: 3px;
    background: var(--arrows-off) right 4px center no-repeat, linear-gradient(#6a6a6a, #5b5b5b);
    color: #ccc;
}
.dark-select.group {
    width: 57px;
    margin-left: 11px;
    color: #a5a5a5;
}
.dark-select.workspace {
    width: 120px;
    margin-left: auto;
    margin-right: 8px;
}
.icons {
    display: flex;
}
.icons + .icons {
    margin-left: 8px;
}
.mode-label {
    width: 56px;
    color: #bbb;
}

/* work area */
.workspace-area {
    flex: 1;
    min-height: 0;
    display: flex;
}
.toolbar {
    width: 39px;
    border-left: 1px solid var(--line);
    background: var(--panel);
}
.strip {
    display: flex;
    align-items: center;
    height: 12px;
    padding: 0 4px;
    border-bottom: 1px solid var(--line);
    background: #3c3c3c;
}
.grip {
    display: block;
    width: 20px;
    height: 4px;
    margin: 3px auto 8px;
    background: repeating-linear-gradient(90deg, #333 0 1px, transparent 1px 2px);
}
.toolbar .grip {
    margin-left: 9px;
}
.tool {
    display: flex;
    align-items: center;
    position: relative;
    width: 32px;
    height: 26px;
    margin-left: 3px;
    padding-left: 4px;
    border-radius: 3px;
}
.tool path, .tool circle, .collapsed path {
    fill: #d4d4d4;
}
.tool .l, .tool .l2, .collapsed .l, .collapsed .l2, .tool path[fill="none"], .collapsed path[fill="none"] {
    fill: none;
}
.tool::after {
    content: "";
    position: absolute;
    right: 4px;
    bottom: 3px;
    border: 2px solid #bbb;
    border-top-color: transparent;
    border-left-color: transparent;
}
.tool.plain::after {
    display: none;
}
.tool.active {
    border: 1px solid #2b2b2b;
    background: #3a3a3a;
    padding-left: 3px;
}
.tools hr {
    height: 1px;
    margin: 1px 4px;
    border: 0;
    background: #333;
}
.mini-icons {
    display: flex;
    gap: 6px;
    padding: 2px 3px 4px;
}
.swatches {
    display: grid;
    grid-template: 10px 9px 9px / 10px 9px 9px;
    padding-left: 4px;
}
.toolbar .swatches {
    padding-top: 1px;
}
.swatches i {
    border: 1px solid #fff;
    outline: 1px solid #333;
}
.fore {
    grid-area: 1 / 1 / 3 / 3;
    background: #0d27cb;
    z-index: 1;
}
.back {
    grid-area: 2 / 2 / 4 / 4;
    background: #5e3f0c;
}
.tool.mask {
    margin-top: 3px;
}

.canvas {
    flex: 1;
    min-width: 0;
    border-left: 2px solid #1f1f1f;
    background: #262626;
}

/* right side */
.right-side {
    width: 283px;
    padding: 0 1px 0 2px;
    background: var(--line);
    display: flex;
    flex-direction: column;
}
.strip.split {
    justify-content: space-between;
    padding: 0 2px 0 25px;
    border-top: 1px solid var(--line);
}
.dock {
    flex: 1;
    display: flex;
    gap: 2px;
    min-height: 0;
}
.collapsed {
    width: 38px;
    background: var(--panel);
}
.collapsed button {
    display: flex;
    flex-direction: column;
    width: 100%;
    height: 41px;
    border-bottom: 2px solid var(--line);
}
.collapsed .grip {
    margin: 4px 0 4px 9px;
}
.collapsed svg {
    margin-left: 10px;
}
.panels {
    flex: 1;
    display: flex;
    flex-direction: column;
    gap: 2px;
    min-width: 0;
}
.panel {
    background: var(--panel);
}
.tabs {
    display: flex;
    height: 17px;
    background: #3b3b3b;
    border-bottom: 1px solid #626262;
}
.tabs button {
    padding: 0 6px 0 7px;
    border-right: 1px solid var(--line);
    font-weight: 600;
    line-height: 16px;
    color: #a5a5a5;
}
.tabs .on {
    height: 17px;
    background: var(--panel);
    color: #f2f2f2;
}
.menu-icon {
    width: 9px;
    height: 7px;
    margin: 5px 3px 0 auto;
    background: repeating-linear-gradient(#ccc 0 1px, transparent 1px 2px);
}
.menu-icon::before {
    content: "";
    display: block;
    width: 0;
    margin: 2px 0 0 -5px;
    border: 2px solid transparent;
    border-top-color: #ccc;
}
.color {
    display: flex;
    height: 105px;
    padding: 7px 1px 7px 7px;
}
.picked {
    width: 38px;
}
.picked .swatches {
    padding: 4px 0 0 3px;
    height: 32px;
}
.warn {
    display: flex;
    align-items: center;
    gap: 4px;
    padding-top: 24px;
    padding-left: 1px;
}
.warn i {
    width: 12px;
    height: 12px;
    border: 1px solid #fff;
    background: #3448a4;
}
.field {
    flex: 1;
    position: relative;
    background: linear-gradient(transparent, #000), linear-gradient(90deg, #fff, #0020ff);
}
.ring {
    position: absolute;
    right: 5px;
    top: 14px;
    width: 12px;
    height: 12px;
    border: 1px solid #ddd;
    border-radius: 50%;
}
.pointer {
    margin: 27px 3px 0 7px;
}
.hue {
    width: 20px;
    background: linear-gradient(red, magenta, blue, cyan, lime, yellow, red);
}
.resize {
    align-self: flex-end;
    width: 10px;
    height: 10px;
    margin-left: 4px;
    background: repeating-linear-gradient(90deg, transparent 0 1px, #535353 1px 2px), repeating-linear-gradient(#222 0 1px, transparent 1px 2px);
    clip-path: polygon(100% 0, 100% 100%, 0 100%);
}
.lib-head {
    display: flex;
    align-items: center;
    height: 28px;
    padding: 0 9px 0 8px;
    border-bottom: 1px solid #333;
}
.lib-head select {
    flex: 1;
    margin-right: 7px;
}
.lib-head button {
    display: flex;
    align-items: center;
    justify-content: center;
    width: 21px;
    height: 18px;
    border-radius: 3px;
}
.lib-head button.on {
    margin-left: 2px;
    border: 1px solid #2a2a2a;
    background: #3c3c3c;
}
.lib-body {
    height: 115px;
    padding-top: 8px;
    background: #484848;
    color: #a5a5a5;
    text-align: center;
    line-height: 15px;
}
.lib-body svg {
    margin: 0 auto;
}
.lib-body p {
    margin: 8px 0 0;
}
.lib-foot {
    display: flex;
    align-items: center;
    height: 24px;
    padding: 0 1px 0 9px;
    border-top: 1px solid #707070;
    color: #8d8d8d;
}
.lib-foot .s, .lib-foot .f {
    opacity: 0.8;
}
.glyph-a {
    width: 24px;
    padding-left: 10px;
    font-size: 16px;
}
.fx {
    font-family: "Liberation Serif", serif;
    font-style: italic;
    font-size: 15px;
}
.lib-foot .fx {
    width: 25px;
    margin-left: 10px;
}
.blue {
    width: 14px;
    height: 14px;
    border: 1px solid #999;
    background: #2c3a91;
}
.stock {
    width: 15px;
    height: 14px;
    margin-left: auto;
    margin-right: 8px;
    border: 1px solid #ddd;
    color: #ddd;
    text-align: center;
    font-size: 8px;
    font-weight: 700;
    line-height: 11px;
}
.lib-foot svg + svg {
    margin: 0 4px 0 7px;
}

/* layers */
.layers {
    flex: 1;
    display: flex;
    flex-direction: column;
    min-height: 0;
}
.layer-row {
    display: flex;
    align-items: center;
    height: 28px;
    padding: 0 5px 0 4px;
    border-bottom: 1px solid #383838;
    box-shadow: inset 0 1px #626262;
    color: #c4c4c4;
}
.layer-row label {
    margin: 0 5px 0 auto;
}
.kind {
    width: 90px;
    padding-left: 20px;
    background: var(--search) 7px center no-repeat, var(--arrows-off) right 4px center no-repeat, linear-gradient(#6a6a6a, #5b5b5b);
}
.blend {
    width: 129px;
}
.filters {
    display: flex;
    gap: 8px;
    margin-left: 10px;
}
.toggle {
    width: 9px;
    height: 17px;
    margin-left: auto;
    border: 1px solid #3a3a3a;
    background: linear-gradient(#777 0 7px, #444 7px);
}
.combo {
    display: flex;
    width: 53px;
    height: 19px;
    border: 1px solid #3a3a3a;
    border-radius: 2px;
}
.combo input {
    flex: 1;
    min-width: 0;
    border: 0;
    background: #4a4a4a;
}
.combo button {
    display: flex;
    align-items: center;
    justify-content: center;
    width: 18px;
    border-left: 1px solid #3a3a3a;
    background: #606060;
}
.combo .caret {
    border-top-color: #a5a5a5;
}
.lock {
    width: 32px;
    padding-left: 2px;
}
.locks {
    display: flex;
    gap: 7px;
}
.layer-list {
    flex: 1;
    border-right: 14px solid #4c4c4c;
    background: #484848;
    box-shadow: inset -1px 0 #3c3c3c;
}
.layer-foot {
    display: flex;
    align-items: center;
    justify-content: flex-end;
    gap: 11px;
    height: 19px;
    padding-right: 26px;
    border-top: 1px solid #333;
    color: #a0a0a0;
}
.layer-foot .fx {
    width: 16px;
    text-align: center;
}

/* new document dialog */
.new-dialog {
    position: absolute;
    top: 99px;
    left: 50%;
    margin: 0;
    transform: translateX(-50%);
    width: 574px;
    padding: 0 6px 6px;
    border: 1px solid #c4c4c4;
    background: #fcfcfc;
    color: #111;
    font-family: "DejaVu Sans Condensed", "Noto Sans", sans-serif;
    font-size: 12px;
}
.titlebar {
    position: relative;
    height: 29px;
    line-height: 30px;
    text-align: center;
    font-family: "Open Sans", sans-serif;
    font-size: 14px;
    color: #333;
}
.titlebar button {
    position: absolute;
    right: 0;
    top: 0;
    display: flex;
    align-items: center;
    justify-content: center;
    width: 31px;
    height: 20px;
    background: #c75050;
}
.dialog-body {
    display: flex;
    justify-content: space-between;
    padding: 10px 11px 14px 10px;
    border: 1px solid #d4d4d4;
    background: #dcdcdc;
}
.fields {
    width: 401px;
}
.row {
    display: flex;
    align-items: center;
    gap: 6px;
    height: 21px;
    margin-bottom: 10px;
}
.row label {
    width: 152px;
    text-align: right;
    white-space: nowrap;
}
.new-dialog input, .new-dialog select {
    height: 21px;
}
.new-dialog input {
    width: 96px;
    padding: 0 4px;
    border: 1px solid #777;
    background: #fff;
    box-shadow: inset 0 1px #ccc;
}
.new-dialog .focused {
    outline: 1px solid #8fbcec;
}
.new-dialog select {
    flex: 1;
    min-width: 0;
    padding: 0 8px;
    border: 1px solid #777;
    border-radius: 2px;
    background: var(--arrows) right 3px top 5px no-repeat, linear-gradient(#fff, #e8e8e8);
}
.new-dialog select:disabled {
    border-color: #aaa;
    background: var(--arrows-off) right 3px top 5px no-repeat, #d8d8d8;
}
.row.name-row {
    gap: 5px;
    margin-bottom: 0;
}
.name-row label {
    width: 102px;
}
.name-row input {
    flex: 1;
}
.off {
    color: #999;
}
fieldset {
    min-width: 0;
    border: 1px solid #adadad;
    box-shadow: 1px 1px #eee;
}
/* the border runs a little above the middle of the document type row */
.doc {
    width: 399px;
    margin: -1px 0 0;
    padding: 10px 7px 8px 0;
}
.doc > legend {
    display: flex;
    align-items: center;
    gap: 6px;
    width: 368px;
    margin-left: 15px;
    padding: 8px 7px 0 0;
}
.doc > legend label {
    width: 107px;
    text-align: right;
    white-space: nowrap;
}
.row select.mode {
    flex: none;
    width: 93px;
    margin-right: 4px;
}
.row.spaced {
    margin: 19px 0;
}
.row select.contents {
    flex: none;
    width: 202px;
}
.chip {
    width: 16px;
    height: 17px;
    border: 1px solid #999;
    background: #808080;
}
.advanced {
    margin: 0 0 0 9px;
    padding: 8px 9px 8px 0;
}
.advanced legend {
    margin-left: 9px;
    padding: 0 4px 0 13px;
    line-height: 14px;
}
.advanced .row label {
    width: 142px;
}
.advanced .row {
    margin-bottom: 9px;
}
.advanced .row:last-child {
    margin-bottom: 0;
}
.actions {
    display: flex;
    flex-direction: column;
    gap: 9px;
    width: 120px;
}
.actions button {
    height: 21px;
    border: 1px solid #777;
    border-radius: 2px;
    background: linear-gradient(#fff, #eaeaea);
}
.actions .default {
    border: 2px solid #707070;
}
.actions button:disabled {
    border-color: #aaa;
    background: #d8d8d8;
    color: #999;
}
.image-size {
    margin: 105px 0 0;
    text-align: center;
    line-height: 23px;
}

/* taskbar */
.taskbar {
    display: flex;
    align-items: center;
    height: 30px;
    background: linear-gradient(90deg, #747474, #8a8a8a 45%, #858586 65%, #646467);
    color: #fff;
    font-size: 12px;
}
.start {
    width: 42px;
    padding-left: 13px;
}
.tasks {
    display: flex;
    gap: 4px;
    padding-right: 3px;
}
.tasks.second {
    gap: 3px;
}
.task {
    display: flex;
    align-items: center;
    justify-content: center;
    width: 41px;
    height: 29px;
}
.task.open {
    border: 1px solid #bcbcbc;
    background: #999;
}
.task.current {
    border: 1px solid #f0f0f0;
    background: #b4b4b4;
}
.app {
    width: 16px;
    height: 16px;
    border: 1px solid;
    text-align: center;
    font-size: 9px;
    font-weight: 600;
    line-height: 14px;
}
.pr {
    color: #d67af0;
    background: #2a0a34;
}
.ch {
    color: #d896f0;
    background: #2a0d36;
}
.en {
    color: #8a93f0;
    background: #171a55;
}
.ae {
    color: #c8a4f4;
    background: #1f1038;
}
.ai {
    color: #f08020;
    background: #2c1706;
}
.ps {
    color: #35bdf0;
    background: #071e30;
}
.tray {
    display: flex;
    align-items: center;
    margin-left: auto;
    gap: 6px;
}
.more {
    align-self: flex-start;
    font-size: 16px;
    line-height: 12px;
}
.up {
    margin: 0 6px;
}
.lang {
    margin-left: 7px;
}
.clock {
    margin-left: 25px;
    margin-right: 32px;
}
```
